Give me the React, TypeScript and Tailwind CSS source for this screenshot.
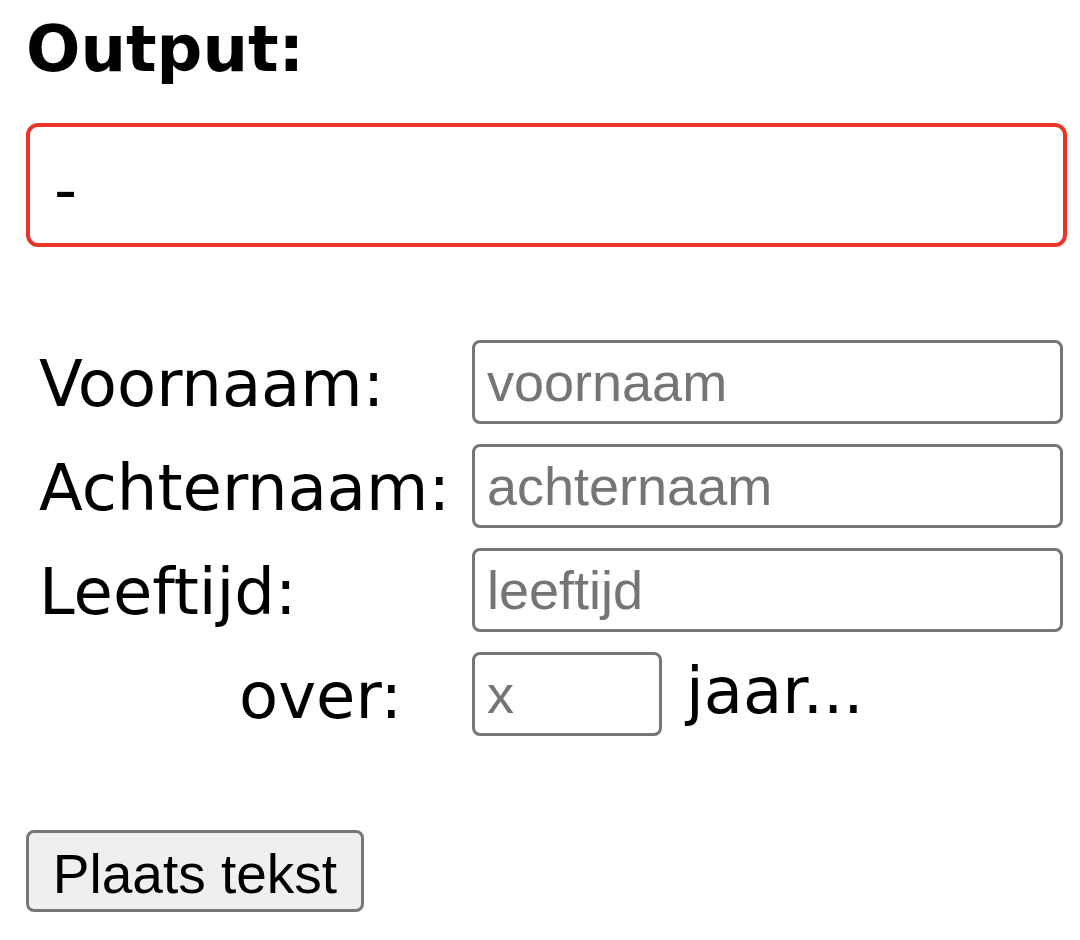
import { useState } from "react";

const labelCls = "text-[64px] leading-[75px] text-black font-['DejaVu_Sans',Verdana,sans-serif] pt-[4px]";
const inputCls =
  "h-[84px] border-[3px] border-[#767676] rounded-[8px] bg-white px-3 text-[54px] text-black font-['Liberation_Sans',Arial,sans-serif] placeholder:text-[#757575] outline-none";

const App = () => {
  const [output, setOutput] = useState("-");
  const [first, setFirst] = useState("");
  const [last, setLast] = useState("");
  const [age, setAge] = useState("");
  const [years, setYears] = useState("");

  const place = () => {
    if (!first && !last) return setOutput("-");
    const later = Number(age) + Number(years || 0);
    setOutput(`${first} ${last} is over ${years || 0} jaar ${later} jaar oud.`);
  };

  return (
    <div className="min-h-screen bg-white pl-[26px] pb-10 font-['DejaVu_Sans',Verdana,sans-serif]">
      <h1 className="pt-[12px] text-[64px] leading-[75px] font-bold text-black">Output:</h1>

      <div className="mt-[36px] w-[1041px] h-[124px] flex items-center border-4 border-[#ea3527] rounded-[12px] pl-6 pt-[10px] text-[64px] text-black">
        {output}
      </div>

      <div className="mt-[93px] ml-[13px] grid grid-cols-[433px_591px] gap-y-[20px]">
        <div className="flex items-center">
          <span className={labelCls}>Voornaam:</span>
        </div>
        <input className={inputCls} placeholder="voornaam" value={first} onChange={(e) => setFirst(e.target.value)} />

        <div className="flex items-center">
          <span className={labelCls}>Achternaam:</span>
        </div>
        <input className={inputCls} placeholder="achternaam" value={last} onChange={(e) => setLast(e.target.value)} />

        <div className="flex items-center">
          <span className={labelCls}>Leeftijd:</span>
        </div>
        <input className={inputCls} placeholder="leeftijd" value={age} onChange={(e) => setAge(e.target.value)} />

        <div className="flex items-center pl-[200px]">
          <span className={labelCls}>over:</span>
        </div>
        <div className="flex items-baseline h-[84px]">
          <input className={`${inputCls} w-[190px]`} placeholder="x" value={years} onChange={(e) => setYears(e.target.value)} />
          <span className="ml-[24px] text-[64px] leading-[40px] text-black">jaar...</span>
        </div>
      </div>

      <button
        onClick={place}
        className="mt-[94px] h-[82px] w-[338px] border-[3px] border-[#767676] rounded-[8px] bg-[#efefef] text-[55px] text-black font-['Liberation_Sans',Arial,sans-serif]"
      >
        Plaats tekst
      </button>
    </div>
  );
};

export default App;
